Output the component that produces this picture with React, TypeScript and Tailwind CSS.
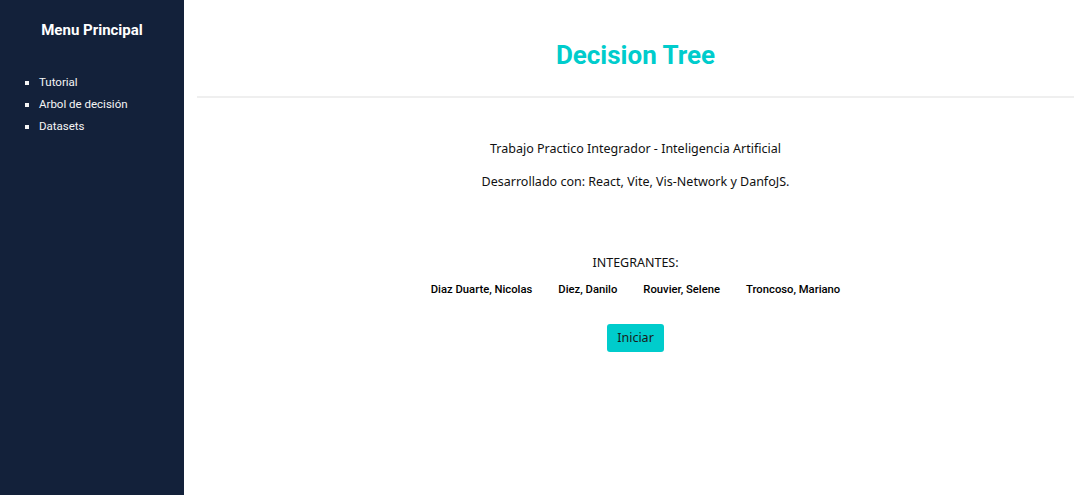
import React from "react";

export default function App() {
  const names = ["Diaz Duarte, Nicolas", "Diez, Danilo", "Rouvier, Selene", "Troncoso, Mariano"];
  return (
    <div className="flex w-[1087px] h-[495px] bg-white overflow-hidden">
      <aside className="w-[184px] h-full bg-[#13213a] text-white shrink-0" style={{ fontFamily: "Roboto, sans-serif" }}>
        <h2 className="text-center font-bold text-[15px] leading-[20px] pt-[20px]">Menu Principal</h2>
        <ul className="list-[square] pl-[39px] mt-[31px] text-[11.5px] leading-[22px] font-normal text-[#f5f5f5]">
          <li>Tutorial</li>
          <li>Arbol de decisión</li>
          <li>Datasets</li>
        </ul>
      </aside>
      <main className="flex-1 px-[13px]">
        <header className="h-[98px] flex items-center justify-center pt-[14px] border-b-2 border-[#efefef]">
          <h1 className="text-[#00cccc] font-bold text-[26px] leading-[30px]" style={{ fontFamily: "Roboto, sans-serif" }}>
            Decision Tree
          </h1>
        </header>
        <section className="flex flex-col items-center text-[#111]" style={{ fontFamily: '"Noto Sans", sans-serif' }}>
          <p className="mt-[41px] text-[12.5px] leading-[20px]">Trabajo Practico Integrador - Inteligencia Artificial</p>
          <p className="mt-[13px] text-[12.5px] leading-[20px]">Desarrollado con: React, Vite, Vis-Network y DanfoJS.</p>
          <p className="mt-[61px] text-[12.5px] leading-[20px]">INTEGRANTES:</p>
          <div className="flex gap-[26px] mt-[7px] text-[11.25px] leading-[20px] font-medium text-black" style={{ fontFamily: "Roboto, sans-serif" }}>
            {names.map((n) => (
              <span key={n}>{n}</span>
            ))}
          </div>
          <button className="mt-[24px] h-[28px] px-[10px] rounded-[3px] bg-[#00cccc] text-[12.5px] text-[#1a1a1a]">
            Iniciar
          </button>
        </section>
      </main>
    </div>
  );
}
